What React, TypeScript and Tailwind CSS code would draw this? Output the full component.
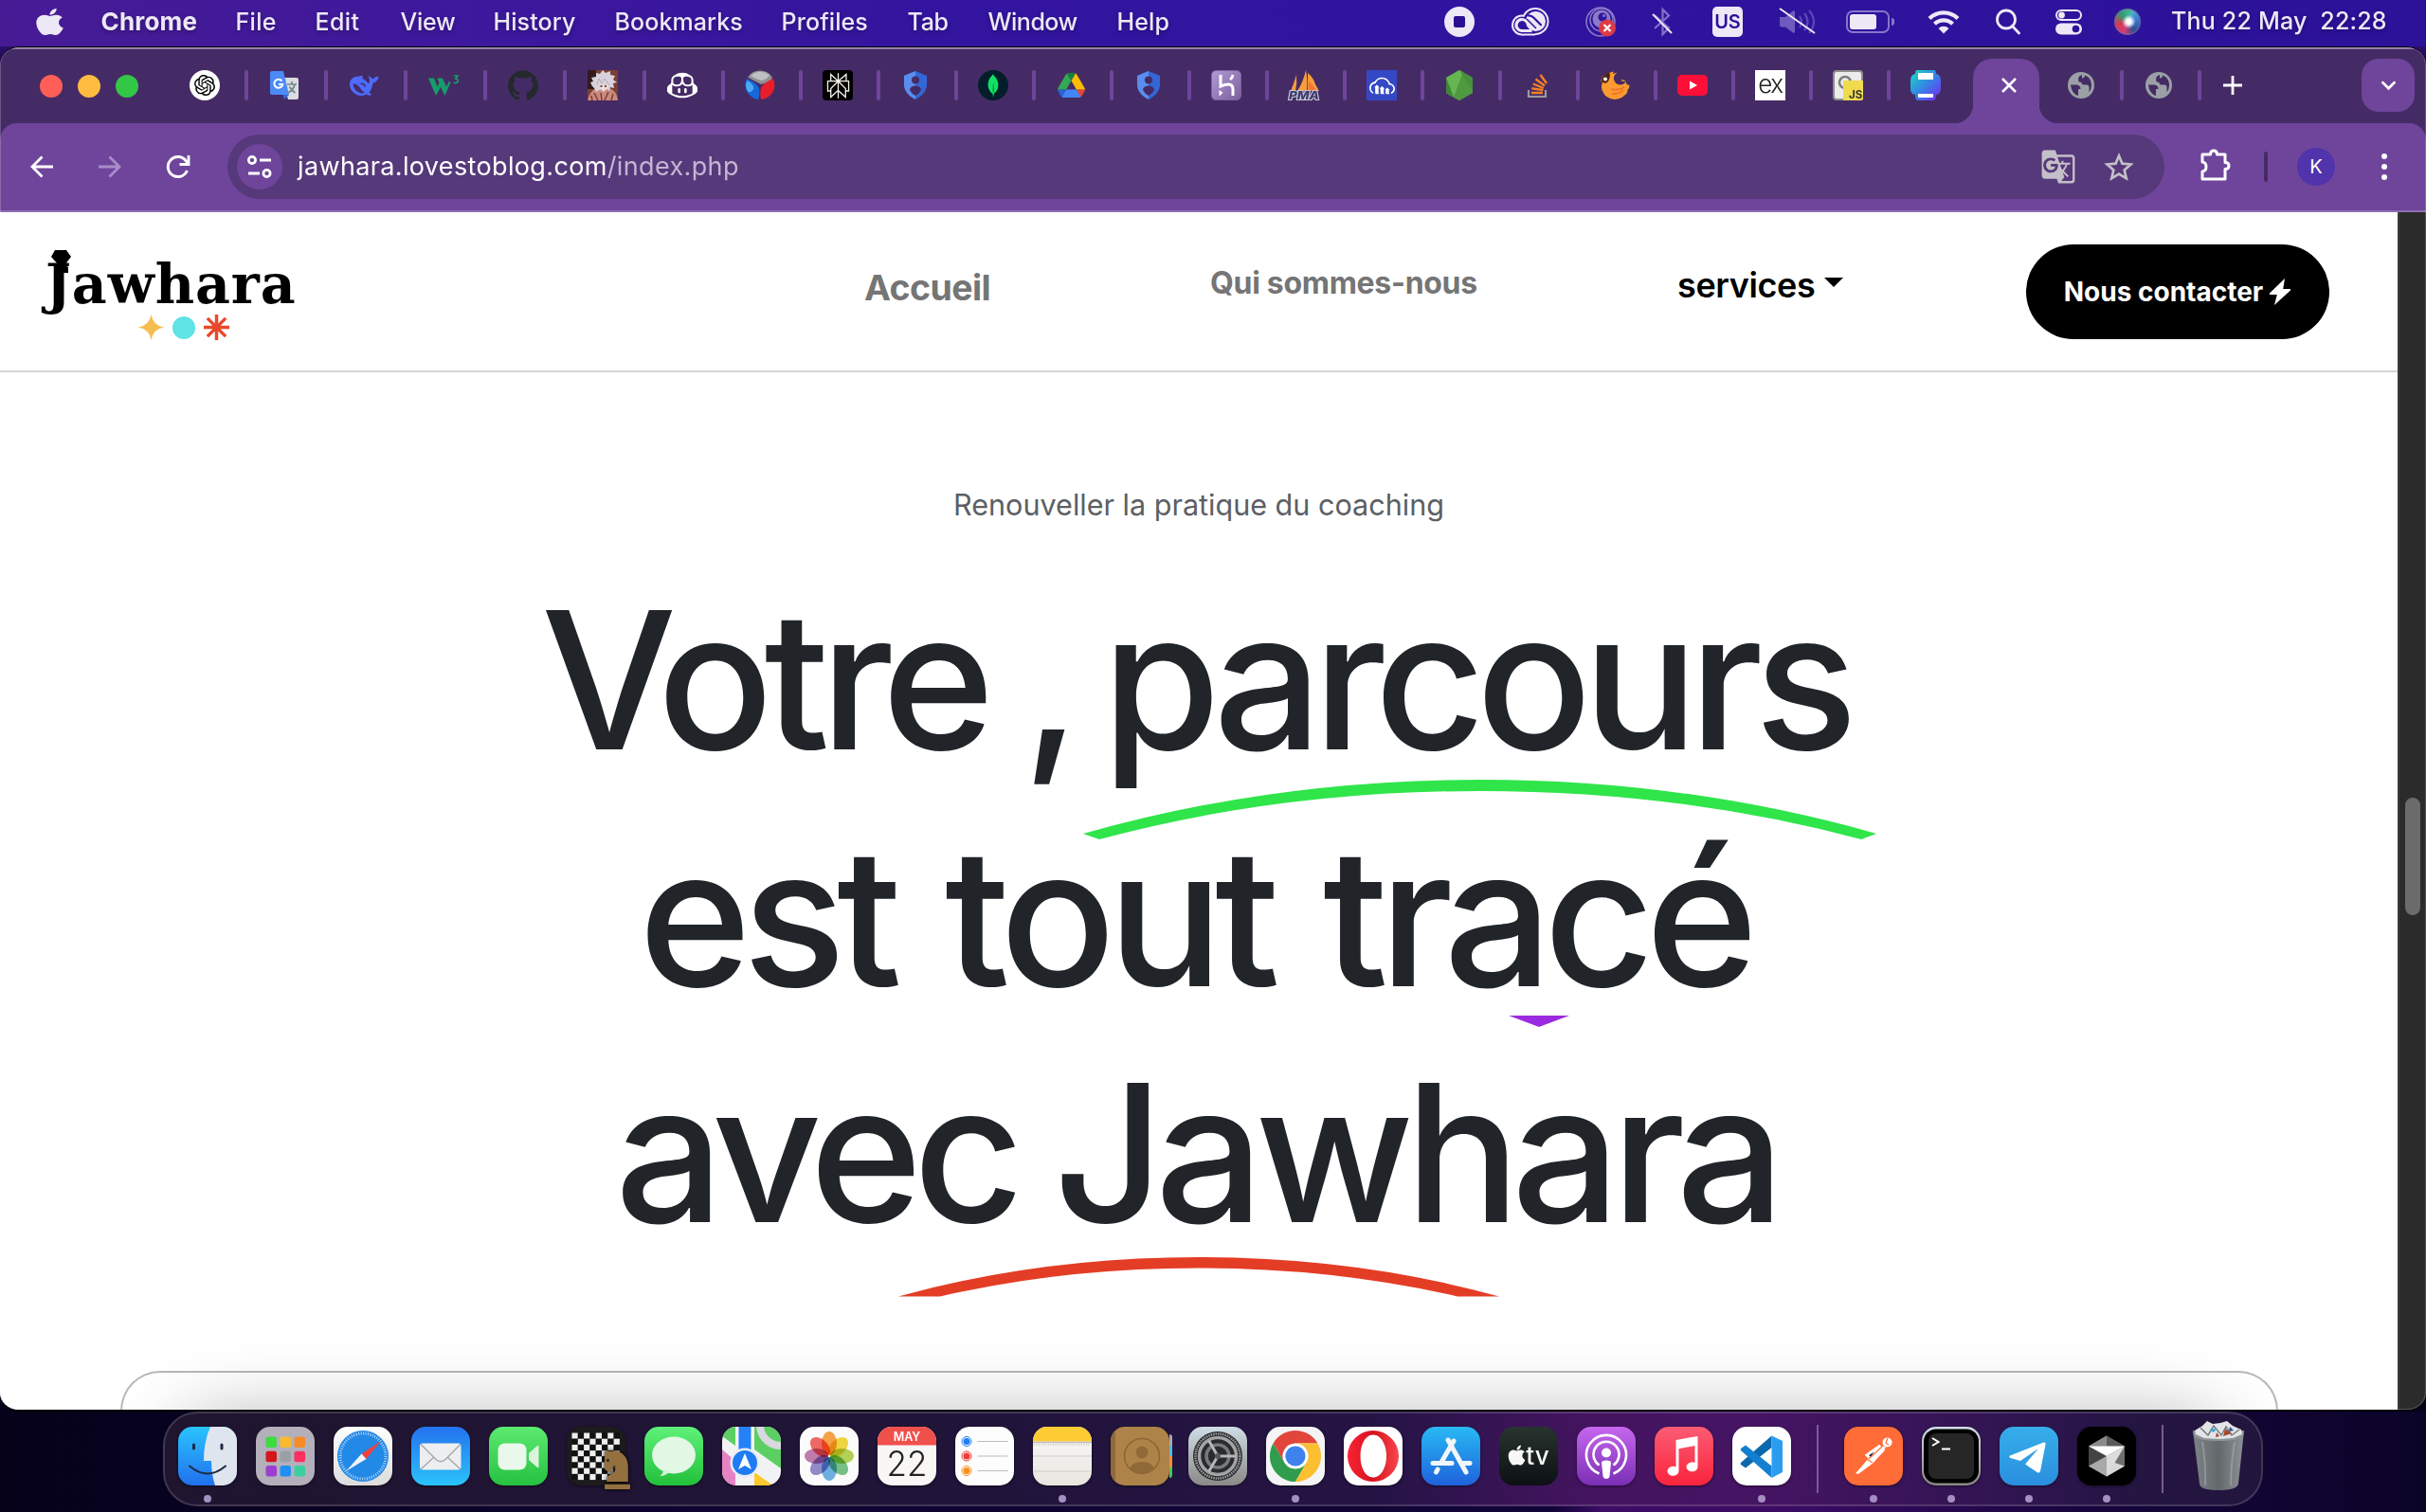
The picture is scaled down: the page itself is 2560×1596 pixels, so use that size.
import type { ReactNode } from "react";
import {
  SiOpenai, SiGithub, SiGithubcopilot, SiPerplexity, SiMongodb, SiCloudinary,
} from "react-icons/si";
import { MdGTranslate } from "react-icons/md";
import { FaApple, FaChessKnight } from "react-icons/fa";

/* ---------- menu bar ---------- */

const menus: { label: string; cls: string }[] = [
  { label: "Chrome", cls: "w-[142px] text-[26px] font-bold tracking-[0.2px]" },
  { label: "File", cls: "w-[84px] tracking-[0.3px]" },
  { label: "Edit", cls: "w-[90px] tracking-[0.4px]" },
  { label: "View", cls: "w-[98px] tracking-[-0.3px]" },
  { label: "History", cls: "w-[128px] tracking-[0.1px]" },
  { label: "Bookmarks", cls: "w-[176px] tracking-[0.1px]" },
  { label: "Profiles", cls: "w-[133px] tracking-[0.1px]" },
  { label: "Tab", cls: "w-[85px] tracking-[-0.3px]" },
  { label: "Window", cls: "w-[136px] tracking-[-0.5px]" },
  { label: "Help", cls: "tracking-[0.1px]" },
];

function MenuBar() {
  return (
    <div className="flex h-[49px] shrink-0 items-center bg-[linear-gradient(90deg,#471b94,#3d189d_20%,#32149f_42%,#30149f_60%,#2c1199)] pb-[3px] text-[25px] font-medium text-[#ece8f6] [text-shadow:0_2px_4px_rgba(0,0,0,0.3)]">
      <FaApple className="ml-[38px] h-[32px] w-[29px] shrink-0" preserveAspectRatio="none" />
      <div className="ml-[39.500px] flex shrink-0">
        {menus.map((m) => (
          <span key={m.label} className={`shrink-0 whitespace-nowrap leading-[32px] ${m.cls}`}>{m.label}</span>
        ))}
      </div>
      <div className="ml-auto flex items-center pr-[38px]">
        <div className="mr-[1px] flex size-8 items-center justify-center rounded-full bg-[#ece8f6]">
          <div className="size-[12px] rounded-[2px] bg-[#2a1090]" />
        </div>
        <svg className="ml-[38px] h-[30px] w-[40px]" viewBox="0 0 40 30">
          <g fill="#ece8f6"><circle cx="11" cy="18.500" r="11" /><circle cx="25" cy="14.500" r="14.500" /><path d="M11 18h14v11.500H11z" /></g>
          <g fill="#31149f"><circle cx="11" cy="18.500" r="9" /><circle cx="25" cy="14.500" r="12.500" /><path d="M11 20h14v7.500H11z" /></g>
          <circle cx="25.500" cy="14.500" r="10.500" fill="#ece8f6" />
          <path d="M21.500 24.500H11a6 6 0 1 1 4.500-10L24 22.500" fill="none" stroke="#ece8f6" strokeWidth="3.200" />
          <path d="M17.500 8.500q3.500-.3 6 2.300l7.500 7.500" fill="none" stroke="#31149f" strokeWidth="2.200" strokeLinecap="round" />
          <path d="m16.500 12.500 9 9" fill="none" stroke="#31149f" strokeWidth="1.600" strokeLinecap="round" />
        </svg>
        <svg className="ml-[38px] size-8" viewBox="0 0 32 32">
          <g fill="none" stroke="#8b7bc8" strokeWidth="1.500">
            <circle cx="16" cy="16" r="15" /><circle cx="17" cy="14" r="12" />
          </g>
          <circle cx="17" cy="13" r="9.500" fill="#8b7bc8" />
          <circle cx="18" cy="11" r="4.500" fill="#31149f" /><circle cx="19.500" cy="9.500" r="1.500" fill="#8b7bc8" />
          <circle cx="23" cy="22.500" r="9" fill="#dc3b46" />
          <path d="m19.500 19 7 7m0-7-7 7" stroke="#fff" strokeWidth="2.200" />
        </svg>
        <svg className="ml-[37px] h-[32px] w-[24px]" viewBox="0 0 24 32" fill="none">
          <path d="m4 9 15 13.500L12.500 29V3L19 9.500 4 23" stroke="#8171c6" strokeWidth="2.200" />
          <path d="m2 8 20 20" stroke="#ece8f6" strokeWidth="2" />
        </svg>
        <div className="ml-[41px] flex size-8 items-center justify-center rounded-[5px] bg-[#ece8f6] text-[20px] font-semibold text-[#2c1199] [text-shadow:none]">US</div>
        <svg className="ml-[38px] h-[30px] w-[40px]" viewBox="0 0 40 30" fill="none">
          <path d="M1 10h6l8-6.500q2-1 2 1v21q0 2-2 1L7 20.500H3q-2 0-2-2z" fill="#6d5cbe" />
          <path d="M22 9q4 6 0 12M27 6q7 9 0 18M32 3q10 12 0 24" stroke="#5a48b4" strokeWidth="2.200" />
          <path d="m1 1 37 26" stroke="#ece8f6" strokeWidth="2" />
        </svg>
        <div className="ml-[31px] flex items-center gap-[2px]">
          <div className="flex h-6 w-[46px] items-center rounded-[7px] border-2 border-[#8577cb] px-[2px]">
            <div className="h-4 w-7 rounded-[3px] bg-[#ece8f6]" />
          </div>
          <div className="h-2 w-[3px] rounded-r-full bg-[#8577cb]" />
        </div>
        <svg className="ml-[35px] h-[26px] w-[34px]" viewBox="0 0 34 26" fill="none" stroke="#ece8f6" strokeWidth="4.200">
          <path d="M2 9.500a21.500 21.500 0 0 1 30 0M7.500 15.200a13.500 13.500 0 0 1 19 0" />
          <path d="M17 25.500 11.500 20a8 8 0 0 1 11 0z" fill="#ece8f6" stroke="none" />
        </svg>
        <svg className="ml-[38px] h-[28px] w-[26px]" viewBox="0 0 26 28" fill="none" stroke="#ece8f6" strokeWidth="2.800">
          <circle cx="11" cy="11.500" r="9.500" /><path d="m17.500 18.500 7 7.500" strokeLinecap="round" />
        </svg>
        <svg className="ml-[37px] h-[28px] w-[28px]" viewBox="0 0 28 28">
          <rect x="1" y="2" width="26" height="10" rx="5" fill="none" stroke="#ece8f6" strokeWidth="2" />
          <circle cx="6.500" cy="7" r="3.400" fill="#ece8f6" />
          <rect x="0" y="15.500" width="28" height="12" rx="6" fill="#ece8f6" />
          <circle cx="21.500" cy="21.500" r="3.800" fill="#2c1199" />
        </svg>
        <div className="ml-[34px] size-7 rounded-full bg-[radial-gradient(circle_at_55%_50%,#ffffff_0_12%,transparent_35%),conic-gradient(from_20deg,#4fb5c8,#3a76d0,#2b4f90,#d33f74,#d23b55,#2f9c72,#4bb59a)] ring-1 ring-[#6f66a8] ring-inset" />
        <span className="ml-[32px] w-[231px] whitespace-pre tracking-[0.2px]">Thu 22 May  22:28</span>
      </div>
    </div>
  );
}

/* ---------- tab favicons ---------- */

const Shield = () => (
  <svg viewBox="0 0 32 32" className="size-8">
    <path d="M16 1 28 6v9c0 7-5 12.500-12 16C9 27.500 4 22 4 15V6z" fill="#3367d6" />
    <path d="M16 1 4 6v9c0 7 5 12.500 12 16z" fill="#5a8dee" />
    <circle cx="16" cy="10.500" r="4" fill="#452b65" />
    <path d="M10 21a6 4.500 0 0 1 12 0q-2 4-6 6-4-2-6-6" fill="#452b65" />
  </svg>
);

const Globe = () => (
  <svg viewBox="0 0 28 28" className="size-[28px]">
    <circle cx="14" cy="14" r="14" fill="#9aa0a6" />
    <path d="M3 13.500h6.500q4 .5 4 4.500h-2.500v7Q4 23 3 13.500M15 3q-4 1-4 5 0 3 3.500 3 0 2.500 2.500 2.500h3q2.500 0 2.500 3v5q2.500-3 2.500-7.500Q25 6 18 3.500q0 3-3 3z" fill="#452b65" />
  </svg>
);

const favicons: { id: string; icon: ReactNode }[] = [
  { id: "chatgpt", icon: <div className="flex size-8 items-center justify-center rounded-full bg-white"><SiOpenai className="size-[22px] text-black" /></div> },
  {
    id: "translate",
    icon: (
      <svg viewBox="0 0 32 32" className="size-8">
        <path d="M13 8h16a2 2 0 0 1 2 2v19a2 2 0 0 1-2 2H20z" fill="#dadce0" />
        <path d="M3 1h12l6 25H3a2 2 0 0 1-2-2V3a2 2 0 0 1 2-2" fill="#4c8bf5" />
        <path d="m14 26 7 0-4.500 5z" fill="#3367d6" />
        <path d="M13.500 11.500a4.500 4.500 0 1 0 .8 3.500H10" fill="none" stroke="#fff" strokeWidth="2" />
        <path d="M19 15h10M24 12v3M27 15q-1 6-7 9M21.500 17.500q2 4 6 6.500" fill="none" stroke="#6f8790" strokeWidth="1.700" />
      </svg>
    ),
  },
  {
    id: "deepseek",
    icon: (
      <svg viewBox="0 0 32 32" className="size-8">
        <path d="M1 15C1 9 6 6 12 6.500q2-1.500 3 .5l-1 1.500q4 2 6.500 5.500 2-1 1.500-4l-1.500-4q3 1 5 3.500 2-2.500 6-3-.5 5.500-5.500 7-1 .4-1 2-.5 5-3.500 8 1.500 2 3 2.500-3 1.500-6-.5Q13 28.500 7.500 25.500 1 21.500 1 15" fill="#4d6bfe" />
        <path d="M4.500 14.500q4.500-.5 7.500 4.500 2.500 4 5 4.500-4 2-7.500-.5Q5 20 4.500 14.500" fill="#452b65" />
        <path d="M12.500 14.500q3.500-1 5 3" stroke="#452b65" strokeWidth="1.500" fill="none" />
      </svg>
    ),
  },
  {
    id: "w3",
    icon: (
      <svg viewBox="0 0 32 32" className="size-8">
        <path d="M0 8.500h6l3.500 9 2-4-2-5h5.500l4 9 3-6 1.500 1.500L17.500 27l-4.500-9-5 9z" fill="#169c6b" />
        <path d="M27 6h4l-2.200 3q2.500.4 2.500 2.600 0 2-3 2-1 0-1.800-.5" fill="none" stroke="#169c6b" strokeWidth="1.700" />
      </svg>
    ),
  },
  { id: "github", icon: <SiGithub className="size-8 text-[#24292e]" /> },
  {
    id: "portrait",
    icon: (
      <svg viewBox="0 0 32 32" className="size-8">
        <path d="M0 0h32v32H0z" fill="#7a3f35" />
        <path d="M0 0h9v20H0z" fill="#33191d" />
        <path d="M0 32q2-11 11-13h12q8 3 9 13z" fill="#c98a7c" />
        <path d="m5 17-2-4 3-1-2-4 5-1 0-4 4 1 3-4 3 3 5-2 0 4 5 1-2 4 4 3-4 1 1 5-4-1-1 4-3-2-8 1-3 2-2-4z" fill="#d9d2dc" />
        <path d="m12 13 4-2 6 3-1 5-4 4-4-4z" fill="#f1dcd6" />
        <path d="m10 15 2-6 3 5 3-5 5 7" fill="#d9d2dc" stroke="#a79fb4" strokeWidth=".8" />
        <path d="M13.500 17h2m2.500 0h2" stroke="#3a2130" strokeWidth="1.600" />
        <path d="m7 24 4 8m11-9-4 9M14 24l1 8M4 27l1 5M27 25l-2 7" stroke="#7a3838" strokeWidth="1.400" />
      </svg>
    ),
  },
  { id: "copilot", icon: <SiGithubcopilot className="size-8 text-white" /> },
  {
    id: "ball",
    icon: (
      <svg viewBox="0 0 32 32" className="size-8">
        <path d="M3 7.500A15.500 15.500 0 0 1 29 7.500Q28 13 17 15 9 11 3 7.500" fill="#8f9194" />
        <path d="M6 6q9-8 20-1-2 5-9 6Q11 9 6 6" fill="#bfc0c3" />
        <path d="M2 9q10 4 13 10 1 6-.5 12A15.500 15.500 0 0 1 2 9" fill="#1668d8" />
        <path d="M2.500 11q6 3 7 8-2 5-6 4Q-1 17 2.500 11" fill="#4ba9f2" />
        <path d="M30 9Q20 13 17 19q-1.500 6 0 12A15.500 15.500 0 0 0 30 9" fill="#e81e2b" />
      </svg>
    ),
  },
  { id: "perplexity", icon: <div className="flex size-8 items-center justify-center rounded-[4px] bg-black"><SiPerplexity className="size-[27px] text-[#f5f3e8]" /></div> },
  { id: "shield-a", icon: <Shield /> },
  { id: "mongodb", icon: <div className="flex size-8 items-center justify-center rounded-full bg-[#021e2b]"><SiMongodb className="size-6 text-[#10e063]" /></div> },
  {
    id: "drive",
    icon: (
      <svg viewBox="0 0 87.300 78" className="w-[29px]">
        <path d="m6.600 66.850 3.850 6.650c.8 1.400 1.950 2.500 3.300 3.300l13.750-23.800h-27.500c0 1.550.4 3.100 1.200 4.500z" fill="#2463d8" />
        <path d="m43.650 25-13.750-23.800c-1.350.8-2.500 1.900-3.300 3.300l-25.400 44a9.060 9.060 0 0 0-1.200 4.500h27.500z" fill="#34a853" />
        <path d="m73.550 76.800c1.350-.8 2.500-1.900 3.300-3.300l1.600-2.750 7.650-13.250c.8-1.400 1.200-2.950 1.200-4.500h-27.500l5.850 11.500z" fill="#ea4335" />
        <path d="m43.650 25 13.750-23.800c-1.350-.8-2.900-1.200-4.500-1.200h-18.500c-1.600 0-3.150.45-4.500 1.200z" fill="#188038" />
        <path d="m59.800 53h-32.300l-13.750 23.800c1.350.8 2.900 1.200 4.500 1.200h50.800c1.600 0 3.150-.45 4.500-1.200z" fill="#4285f4" />
        <path d="m73.400 26.500-12.700-22c-.8-1.400-1.950-2.500-3.300-3.300l-13.750 23.800 16.150 28h27.450c0-1.550-.4-3.100-1.200-4.500z" fill="#fbbc04" />
      </svg>
    ),
  },
  { id: "shield-b", icon: <Shield /> },
  {
    id: "heroku",
    icon: (
      <div className="size-8 rounded-[5px] border border-[#7a639f] bg-[linear-gradient(135deg,#b19bd2,#7c5f9f)]">
        <svg viewBox="0 0 30 30" className="size-full" fill="none" stroke="#fff" strokeWidth="3">
          <path d="M9 4v12q13-5 13 3v7" />
          <path d="M22 4q-.3 3-3 5" strokeWidth="2.600" />
          <path d="m7.500 20 4 3-4 3.500z" fill="#fff" stroke="none" />
        </svg>
      </div>
    ),
  },
  {
    id: "pma",
    icon: (
      <svg viewBox="0 0 32 32" className="size-8 overflow-visible">
        <path d="M8 5q1 9-1 17H2Q5 15 8 5M18 0q2 10 1 22H9Q15 13 18 0M20 3q6 5 8 12l4 7H20z" fill="#f89c3c" />
        <path d="m21 11 9 11h-9z" fill="#f2763a" />
        <text x="0" y="31" textLength="32" lengthAdjust="spacingAndGlyphs" fontFamily="Inter, sans-serif" fontSize="12" fontWeight="800" fontStyle="italic" fill="#3c3b6e" stroke="#c9c9da" strokeWidth="2" paintOrder="stroke">PMA</text>
      </svg>
    ),
  },
  { id: "cloudinary", icon: <div className="flex size-8 items-center justify-center bg-[#3448c5]"><SiCloudinary className="size-[27px] text-white" /></div> },
  {
    id: "node",
    icon: (
      <svg viewBox="0 0 32 32" className="size-8">
        <path d="m16 0 14 8v16l-14 8-14-8V8z" fill="#539e43" />
        <path d="m2 8 6 20-6-4zM2 8l14-8 4 2L10 29z" fill="#65b550" />
        <path d="m20 2 10 22-14 8-6-3z" fill="#4f9a40" />
        <path d="m16 0 14 8v14z" fill="#478f3a" />
        <path d="m2 8 8 21-8-5z" fill="#3f8438" />
      </svg>
    ),
  },
  {
    id: "stackoverflow",
    icon: (
      <svg viewBox="0 0 32 32" className="size-8" fill="none">
        <path d="M7 21v7h18v-7" stroke="#9a9b9e" strokeWidth="2.200" />
        <path d="M10 24h12M10.300 19.300l12 1.800M11.800 14.500l11 4.500M14.500 9.500l9.500 7M19.500 5l6.500 9" stroke="#f48024" strokeWidth="2.400" />
      </svg>
    ),
  },
  {
    id: "bird",
    icon: (
      <svg viewBox="0 0 32 32" className="size-8">
        <path d="M1 11Q4 3 15 1.500L13.500 4l5-1.500Q14 6 15 10q1.500 5 6.500 5.500 5 0 6-4-3.500 1.500-5-1.500 5 0 6 5l3 1q0 3-2 5 0 4-4 6-2 3-10 4Q6 30 3 22q-2-4 0-9z" fill="#fb9a2f" />
        <path d="M1.500 11Q4 4 10.500 2.500q1.500 6-2.500 10.500-4 2-6.500-2" fill="#4b240f" />
        <circle cx="6" cy="9.500" r="2" fill="#fff" />
        <path d="M12 20q8 2 14-2M13 25q7 1 12-4" stroke="#f0702a" strokeWidth="1.600" fill="none" />
      </svg>
    ),
  },
  { id: "youtube", icon: <svg viewBox="0 0 32 32" className="size-8"><rect y="5" width="32" height="22" rx="5" fill="#ff0f38" /><path d="M13 11.500v9l8-4.500z" fill="#fff" /></svg> },
  { id: "express", icon: <div className="flex size-8 items-center justify-center bg-white pb-[3px] text-[26px] font-light tracking-[-1.5px] text-[#222]">ex</div> },
  {
    id: "chartjs",
    icon: (
      <svg viewBox="0 0 32 32" className="size-8">
        <rect x="1" y="1" width="30" height="30" rx="3" fill="#ececec" stroke="#8d8d8d" strokeWidth="2" />
        <circle cx="13" cy="13" r="6" fill="none" stroke="#7d7d7d" strokeWidth="2.500" />
        <path d="M11 11h21v19a2 2 0 0 1-2 2H11z" fill="#f0db4f" />
        <text x="17" y="30" fontFamily="Inter, sans-serif" fontWeight="700" fontSize="11.500" fill="#33332a">JS</text>
      </svg>
    ),
  },
  {
    id: "printer",
    icon: (
      <svg viewBox="0 0 32 32" className="size-8">
        <defs><linearGradient id="prn" x1="0" y1="0" x2="1" y2="1"><stop stopColor="#12dfc5" /><stop offset=".55" stopColor="#3a7be6" /><stop offset="1" stopColor="#7a22f0" /></linearGradient></defs>
        <path d="M7 0h18q2 0 2 4 5 1 5 7v8q0 7-5 7 0 6-3 6H8q-3 0-3-6-5 0-5-7v-8q0-6 5-7 0-4 2-4" fill="url(#prn)" />
        <path d="M8 3h16v7H8zM8 25h16v4H8z" fill="#fff" />
      </svg>
    ),
  },
];

function TabCell({ icon, wide, last }: { icon: ReactNode; wide?: boolean; last?: boolean }) {
  return (
    <div className={`flex h-[76px] shrink-0 items-center justify-between pl-[21px] ${wide ? "w-[84px] pr-px" : "w-[82px]"}`}>
      <div className="flex size-8 items-center justify-center">{icon}</div>
      {!last && <div className="h-8 w-1 rounded-full bg-[#6e459b]" />}
    </div>
  );
}

function TabStrip() {
  return (
    <div className="flex h-[78px] shrink-0 bg-[#452b65]">
      <div className="mr-[33px] ml-[42px] flex h-[78px] items-center gap-4">
        <div className="size-6 rounded-full bg-[#ff5f57]" />
        <div className="size-6 rounded-full bg-[#febc40]" />
        <div className="size-6 rounded-full bg-[#33c748]" />
      </div>
      {favicons.map((f, i) => (
        <TabCell key={f.id} icon={f.icon} wide={i < 6} last={i === favicons.length - 1} />
      ))}
      <div className="relative mt-[10px] mr-[7px] ml-[5px] flex h-[68px] w-[70px] shrink-0 items-center justify-center rounded-t-[20px] bg-[#6e459b] pb-[12px] pl-[6px]">
        <div className="absolute right-full bottom-0 size-5 bg-[radial-gradient(circle_at_0_0,transparent_20px,#6e459b_20.5px)]" />
        <div className="absolute bottom-0 left-full size-5 bg-[radial-gradient(circle_at_100%_0,transparent_20px,#6e459b_20.5px)]" />
        <svg viewBox="0 0 16 16" className="size-4" stroke="#fff" strokeWidth="2.600"><path d="m1 1 14 14M15 1 1 15" /></svg>
      </div>
      <TabCell icon={<Globe />} />
      <TabCell icon={<Globe />} />
      <div className="flex h-[76px] w-[66px] items-center justify-center">
        <svg viewBox="0 0 20 20" className="size-5" stroke="#fff" strokeWidth="2.800"><path d="M10 0v20M0 10h20" /></svg>
      </div>
      <div className="mt-[10px] mr-3 ml-auto flex h-[56px] w-[56px] items-center justify-center rounded-[18px] bg-[#6e459b]">
        <svg viewBox="0 0 18 12" className="h-[11px] w-[17px]" fill="none" stroke="#fff" strokeWidth="3"><path d="m1.500 1.500 7.500 7.500 7.500-7.500" /></svg>
      </div>
    </div>
  );
}

function Toolbar() {
  return (
    <div className="h-[94px] shrink-0 bg-[#452b65]">
      <div className="flex h-full items-center rounded-t-[18px] border-b-2 border-[#8e6fb3] bg-[#6e459b]">
        <svg viewBox="0 0 24 24" className="ml-8 size-6" fill="none" stroke="#fff" strokeWidth="2.800"><path d="M24 12H2M12.500 1.500 2 12l10.500 10.500" /></svg>
        <svg viewBox="0 0 24 24" className="ml-[48px] size-6" fill="none" stroke="#a98dc8" strokeWidth="2.800"><path d="M0 12h22M11.500 1.500 22 12 11.500 22.500" /></svg>
        <svg viewBox="0 0 26 26" className="ml-[47px] size-[26px]" fill="none" stroke="#fff" strokeWidth="2.900"><path d="M22.500 17A10.500 10.500 0 1 1 21 6.500l2.500 3M24 1v9.500h-9.500" /></svg>
        <div className="ml-[39px] flex h-[68px] w-[2044px] items-center rounded-full bg-[#56397a] pl-[10px]">
          <div className="flex size-12 items-center justify-center rounded-full bg-[#6e459b]">
            <svg viewBox="0 0 26 24" className="h-6 w-[26px]" fill="none" stroke="#fff" strokeWidth="2.800">
              <circle cx="5" cy="5" r="3.600" /><path d="M13 5h12M1 19h12" /><circle cx="20.500" cy="19" r="3.600" />
            </svg>
          </div>
          <span className="ml-[16px] pt-px text-[27px] tracking-[0.36px] whitespace-nowrap text-white">jawhara.lovestoblog.com<span className="text-[#c3b5d3]">/index.php</span></span>
          <MdGTranslate className="ml-auto size-[38px] text-[#c4bfc8]" />
          <svg viewBox="0 0 32 32" className="mr-[32px] ml-[29px] size-8" fill="none" stroke="#c4bfc8" strokeWidth="2.700"><path d="m16 4.500 3.500 8.200 9 .8-6.800 6 2 8.800-7.700-4.700-7.700 4.700 2-8.800-6.800-6 9-.8z" /></svg>
        </div>
        <svg viewBox="0 0 36 36" className="ml-[36px] size-9 -translate-y-[2px]" fill="none" stroke="#fff" strokeWidth="3" strokeLinejoin="round">
          <path d="M4 7h8.500q0-4 3.500-4t3.500 4H28v8.500q4 0 4 3.500t-4 3.500V33H4v-8q4-.5 4-5t-4-5z" />
        </svg>
        <div className="ml-[33px] h-8 w-1 rounded-full bg-[#452b65]" />
        <div className="ml-[31px] flex size-10 items-center justify-center rounded-full bg-[#5133ab] text-[20px] text-white">K</div>
        <div className="ml-[49px] flex flex-col gap-[5px]">
          <div className="size-[6px] rounded-full bg-white" />
          <div className="size-[6px] rounded-full bg-white" />
          <div className="size-[6px] rounded-full bg-white" />
        </div>
      </div>
    </div>
  );
}

/* ---------- web page ---------- */

function Logo() {
  return (
    <div className="relative mt-[14px] ml-[44px] w-[272px] shrink-0">
      <svg viewBox="0 0 24 24" className="absolute top-[-6px] left-[9px] size-6"><path d="M5 0h12l5 7-7 9 4 2v6H5v-6l4-2-8-9z" /></svg>
      <div className="ml-[4px] font-['DejaVu_Serif'] text-[57px] leading-[60px] font-bold tracking-[0.9px] text-black">Jawhara</div>
      <div className="mt-[2px] ml-[102px] flex items-center gap-[9px]">
        <svg viewBox="0 0 28 28" className="size-[27px]"><path d="M14 0q2 12 14 14-12 2-14 14Q12 16 0 14 12 12 14 0" fill="#f5bd50" /></svg>
        <div className="size-6 rounded-full bg-[#5fe3e5]" />
        <svg viewBox="0 0 28 28" className="size-[27px]" stroke="#e8482a" strokeWidth="3.600"><path d="M14 0v28M0 14h28M4 4l20 20M24 4 4 24" /></svg>
      </div>
    </div>
  );
}

function SiteHeader() {
  return (
    <header className="flex h-[169px] shrink-0 items-center border-b-2 border-[#d5d5d5] bg-white font-semibold">
      <Logo />
      <a className="ml-[596px] w-[365px] shrink-0 pb-[7px] text-[37.5px] font-[650] tracking-[-0.6px] whitespace-nowrap text-[#757575]">Accueil</a>
      <a className="w-[493px] shrink-0 pb-[17px] text-[32px] font-[650] tracking-[-0.3px] whitespace-nowrap text-[#757575]">Qui sommes-nous</a>
      <a className="flex w-[368px] shrink-0 items-center gap-[10px] pb-[14px] text-[36px] tracking-[-0.4px] text-black">
        services
        <span className="mb-[6px] border-x-[10px] border-t-[10px] border-x-transparent border-t-black" />
      </a>
      <button className="flex h-[100px] w-[320px] shrink-0 items-center justify-center gap-[6px] rounded-full bg-black text-[28px] font-bold text-white">
        Nous contacter
        <svg viewBox="0 0 24 28" className="h-[28px] w-[24px]"><path d="M17 0 1 15.500q-.8 1.500.8 1.500h7L6 28 23 12.500q.8-1.500-.8-1.500h-7z" fill="#fff" /></svg>
      </button>
    </header>
  );
}

function Hero() {
  return (
    <main className="flex flex-1 flex-col bg-white">
      <p className="mt-[120px] ml-[1006px] text-[30.6px] leading-[40px] tracking-[-0.02px] whitespace-nowrap text-[#5c5f63]">Renouveller la pratique du coaching</p>
      <h1 className="relative mt-[40px] h-[750px] text-[202px] leading-[250px] font-medium tracking-[-9.2px] whitespace-nowrap text-[#212529]">
        <span className="flex h-[249.600px] pl-[571px]">
          <span className="w-[508px] tracking-[-9.400px]">Votre</span>
          <span className="w-[84px]">,</span>
          <span className="tracking-[-9.400px]">parcours</span>
        </span>
        <span className="flex h-[249.600px] pl-[674px]">
          <span className="w-[323px]">est</span>
          <span className="w-[399px] tracking-[-8.400px]">tout</span>
          <span>tracé</span>
        </span>
        <span className="flex h-[249.600px] pl-[649px]">
          <span className="w-[463px]">avec</span>
          <span>Jawhara</span>
        </span>
        <svg viewBox="0 0 837 64" className="absolute top-[229px] left-[1143px] h-[64px] w-[837px]"><path d="M0 58Q200 1 418.500 1T837 58L821 64Q630 13 418.500 13T17 64z" fill="#2fe54a" /></svg>
        <svg viewBox="0 0 64 12" className="absolute top-[479px] left-[1592px] h-[12px] w-[64px]"><path d="M0 0h64L32 12z" fill="#9b2be0" /></svg>
        <svg viewBox="0 0 634 43" className="absolute top-[733px] left-[948px] h-[43px] w-[634px]"><path d="M0 42.500Q150 1 317 1t317 41.500h-44Q460 12.500 317 12.500T44 42.500z" fill="#e43d26" /></svg>
      </h1>
      <section className="mt-[104px] ml-[127px] h-[60px] w-[2277px] rounded-t-[42px] border-2 border-b-0 border-[#b8b8b8] pt-[50px] pr-[58px] pl-[62px]">
        <div className="h-[300px] rounded-[40px] bg-[#dcdcdc] shadow-[0_0_80px_rgba(0,0,0,0.32)]" />
      </section>
    </main>
  );
}

/* ---------- dock ---------- */

const Tile = ({ bg, children }: { bg: string; children?: ReactNode }) => (
  <div className={`size-[62px] overflow-hidden rounded-[15px] shadow-[0_1px_3px_rgba(0,0,0,0.5)] ${bg}`}>
    <svg viewBox="0 0 62 62" className="size-full">{children}</svg>
  </div>
);

const launchColors = ["#3ddc3f", "#fdb92c", "#f78b28", "#d3151c", "#9aa0a5", "#ff2f5f", "#9c3fd0", "#1f8ff5", "#3ccf9e"];
const petals = ["#f7942a", "#efd21f", "#a8cc3b", "#5fb873", "#57a5dc", "#7f78c0", "#b8679f", "#f0504a"];

const apps: { id: string; open?: boolean; icon: ReactNode }[] = [
  {
    id: "finder", open: true,
    icon: (
      <Tile bg="bg-[linear-gradient(#2ac4fd,#2070ee)]">
        <path d="M34 0Q27 15 27 36h8q0 14 4 26h23V0z" fill="#dfe5ee" />
        <path d="M16.500 19v4M46 19v4" stroke="#1c2b44" strokeWidth="3" strokeLinecap="round" />
        <path d="M12 41.500q19 16 38 0" fill="none" stroke="#1c2b44" strokeWidth="2" strokeLinecap="round" />
      </Tile>
    ),
  },
  {
    id: "launchpad",
    icon: (
      <Tile bg="bg-[#b3b0bb]">
        {launchColors.map((c, i) => <rect key={c} x={10.5 + (i % 3) * 15} y={10.5 + Math.floor(i / 3) * 15.3} width="11.500" height="11.500" rx="2.500" fill={c} />)}
      </Tile>
    ),
  },
  {
    id: "safari",
    icon: (
      <Tile bg="bg-[linear-gradient(#fff,#dcdcdc)]">
        <circle cx="31" cy="31" r="27" fill="#2389e6" />
        <circle cx="31" cy="31" r="24" fill="none" stroke="#bfe0fb" strokeWidth="3" strokeDasharray="0.900 1.600" />
        <path d="m50 15-15.500 19-5-5.500z" fill="#f0403a" />
        <path d="m13 47 16.500-18.500 5 5.500z" fill="#f1f3f5" />
      </Tile>
    ),
  },
  {
    id: "mail",
    icon: (
      <Tile bg="bg-[linear-gradient(#2472ef,#2bc3fb)]">
        <rect x="9" y="17.500" width="43.500" height="28" rx="3" fill="#eceef0" />
        <path d="m10 18.500 16 16q5 4.500 10 0l16-16M10 45l14-13M52 45 38 32" fill="none" stroke="#a4a8ad" strokeWidth="1.400" />
      </Tile>
    ),
  },
  {
    id: "facetime",
    icon: (
      <Tile bg="bg-[linear-gradient(#5bea70,#27c140)]">
        <rect x="9.500" y="17.500" width="30" height="28" rx="7" fill="#e9f8ea" />
        <path d="m42 28 9-8q1.500-1 1.500 1v21q0 2-1.500 1l-9-8z" fill="#dcf3de" />
      </Tile>
    ),
  },
  {
    id: "chess",
    icon: (
      <div className="relative">
        <Tile bg="bg-[#1c1c1c]">
          {Array.from({ length: 64 }, (_, i) => (
            <rect key={i} x={5.5 + (i % 8) * 6.3} y={6.5 + Math.floor(i / 8) * 6.2} width="6.300" height="6.200" fill={(i + Math.floor(i / 8)) % 2 ? "#111" : "#eee"} />
          ))}
        </Tile>
        <FaChessKnight className="absolute right-[-5px] bottom-[-4px] h-[43px] w-[27px] text-[#94703f] drop-shadow-[0_0_2px_#000]" preserveAspectRatio="none" />
      </div>
    ),
  },
  {
    id: "messages",
    icon: (
      <Tile bg="bg-[linear-gradient(#5ff179,#22c03b)]">
        <ellipse cx="31" cy="30" rx="23" ry="19.500" fill="#e2f7e4" />
        <path d="M20 45q0 5-4 7 7 0 11-5z" fill="#d4f1d7" />
      </Tile>
    ),
  },
  {
    id: "maps",
    icon: (
      <Tile bg="bg-[#f2f2f4]">
        <path d="M0 0h14v20L0 10zM34 0h28v44L34 24z" fill="#5ccf62" />
        <path d="M0 24 14 36v26H0z" fill="#e583c5" />
        <path d="m34 48 20 14H34z" fill="#fbc82e" />
        <path d="M40 0a22 22 0 0 0 22 20" fill="none" stroke="#d8d8e0" strokeWidth="8" />
        <path d="M17.500 0h13v34h-13z" fill="#2581f7" />
        <circle cx="24" cy="38" r="15.500" fill="#e9ecf4" />
        <circle cx="24" cy="38" r="13" fill="#1f7cf2" />
        <path d="m24 28 7 17-7-4-7 4z" fill="#fff" />
      </Tile>
    ),
  },
  {
    id: "photos",
    icon: (
      <Tile bg="bg-[#fbfbfb]">
        {petals.map((c, i) => <ellipse key={c} cx="31" cy="17.500" rx="8" ry="12.500" fill={c} opacity=".85" transform={`rotate(${i * 45} 31 31)`} className="mix-blend-multiply" />)}
      </Tile>
    ),
  },
  {
    id: "calendar",
    icon: (
      <Tile bg="bg-[#f8f7f6]">
        <path d="M0 0h62v19.500H0z" fill="#f0504c" />
        <text x="31" y="15" textAnchor="middle" fontFamily="Inter, sans-serif" fontWeight="600" fontSize="12.500" fill="#fff">MAY</text>
        <text x="31" y="52" textAnchor="middle" textLength="43" lengthAdjust="spacingAndGlyphs" fontFamily="Inter, sans-serif" fontWeight="300" fontSize="37" fill="#222">22</text>
      </Tile>
    ),
  },
  {
    id: "reminders",
    icon: (
      <Tile bg="bg-[#fdfdfd]">
        {["#1f7cf2", "#ee3d38", "#f58f1f"].map((c, i) => (
          <g key={c}>
            <circle cx="12" cy={15.5 + i * 15.5} r="3.600" fill={c} /><circle cx="12" cy={15.5 + i * 15.5} r="5" fill="none" stroke={c} />
            <path d={`M23.500 ${15.5 + i * 15.5}h32`} stroke="#bcbcbc" strokeWidth="1.200" />
          </g>
        ))}
      </Tile>
    ),
  },
  {
    id: "notes", open: true,
    icon: (
      <Tile bg="bg-[linear-gradient(#fafafa,#e8e5df)]">
        <path d="M0 0h62v15.500H0z" fill="#fdcb33" />
        <path d="M0 16.500h62" stroke="#bdbab4" strokeWidth="1.500" />
        <path d="M1 19h60" stroke="#aaa7a2" strokeDasharray="1 1.500" />
        <path d="M0 31h62M0 47h62" stroke="#cfccc8" strokeWidth="1.200" />
      </Tile>
    ),
  },
  {
    id: "contacts",
    icon: (
      <div className="flex items-center">
        <Tile bg="bg-[#ae8349]">
          <path d="M0 0h5v62H0z" fill="#8f6a38" />
          <circle cx="33" cy="31" r="18.500" fill="none" stroke="#8a6634" strokeWidth="1.500" />
          <circle cx="33" cy="27" r="6.500" fill="#8f6a38" />
          <path d="M20 44q3-7 13-7t13 7q-6 6-13 5.500Q25 49 20 44" fill="#8f6a38" />
        </Tile>
        <div className="-mr-[3px] flex h-[46px] w-[3px] flex-col overflow-hidden rounded-r-[3px]">
          <div className="flex-1 bg-[#a9a9ae]" /><div className="flex-1 bg-[#52b8ec]" /><div className="flex-1 bg-[#f2912f]" /><div className="flex-1 bg-[#45c75b]" />
        </div>
      </div>
    ),
  },
  {
    id: "settings",
    icon: (
      <Tile bg="bg-[linear-gradient(#cfdde6,#8a8987)]">
        <circle cx="31" cy="31" r="26" fill="#2a2b2c" />
        <circle cx="31" cy="31" r="23.500" fill="none" stroke="#9b9d9f" strokeWidth="2.500" strokeDasharray="1.500 1" />
        <circle cx="31" cy="31" r="19.500" fill="none" stroke="#a2a4a6" strokeWidth="3.500" />
        <circle cx="31" cy="31" r="12" fill="none" stroke="#77797b" strokeWidth="3.500" />
        <path d="M31 31h19M31 31 21.500 14.500M31 31l-9.500 16.500" stroke="#b4b6b8" strokeWidth="3" />
        <circle cx="31" cy="31" r="3" fill="#55585a" />
      </Tile>
    ),
  },
  {
    id: "chrome", open: true,
    icon: (
      <Tile bg="bg-[#f4f4f6]">
        <g transform="translate(4 4) scale(1.125)">
          <path d="M24 12h20.800A24 24 0 0 0 3.200 12l10.400 18A12 12 0 0 1 24 12z" fill="#e2463b" />
          <path d="M13.600 30 3.200 12A24 24 0 0 0 24 48l10.400-18a12 12 0 0 1-20.800 0z" fill="#2f9d4d" />
          <path d="M34.400 30 24 48a24 24 0 0 0 20.800-36H24a12 12 0 0 1 10.400 18z" fill="#fcbf32" />
          <circle cx="24" cy="24" r="11.700" fill="#fff" /><circle cx="24" cy="24" r="9.400" fill="#3f82ee" />
        </g>
      </Tile>
    ),
  },
  {
    id: "opera",
    icon: (
      <Tile bg="bg-white">
        <defs><linearGradient id="op" x1="0" x2="1"><stop stopColor="#fb2334" /><stop offset=".5" stopColor="#d3141f" /><stop offset="1" stopColor="#f9464c" /></linearGradient></defs>
        <path fillRule="evenodd" d="M31 4a27 27 0 1 0 0 54 27 27 0 0 0 0-54m0 4.500c8 0 14 10 14 22.500S39 53.500 31 53.500 17.500 43.500 17.500 31 23 8.500 31 8.500" fill="url(#op)" />
      </Tile>
    ),
  },
  {
    id: "appstore",
    icon: (
      <Tile bg="bg-[linear-gradient(#28b9f4,#1f62dc)]">
        <g stroke="#f1f6fb" strokeWidth="5" strokeLinecap="round"><path d="M12 38.500h20M44 38.500h7M34 15 21 37.500M28 14l19 34M17 45l-1.500 3" /></g>
      </Tile>
    ),
  },
  {
    id: "tv",
    icon: (
      <div className="flex size-[62px] items-center justify-center rounded-[15px] bg-[linear-gradient(#28342f,#0c1013)] pb-[3px] text-[26px] leading-none font-medium text-[#f7f7f7]">
        <FaApple className="h-[24px] w-[19px]" /><span className="mt-[2px]">tv</span>
      </div>
    ),
  },
  {
    id: "podcasts",
    icon: (
      <Tile bg="bg-[linear-gradient(#c667ee,#7a2fb4)]">
        <g fill="none" stroke="#fff" strokeWidth="2.600">
          <path d="M23.500 49.500a21 21 0 1 1 15 0" /><path d="M23.500 40.500a13.500 13.500 0 1 1 15 0" />
        </g>
        <circle cx="31" cy="27.500" r="5" fill="#fff" />
        <path d="M26 38q0-2.500 5-2.500t5 2.500l-1.500 14q-.5 3-3.500 3t-3.500-3z" fill="#fff" />
      </Tile>
    ),
  },
  {
    id: "music",
    icon: (
      <Tile bg="bg-[linear-gradient(#fb5c74,#fa243c)]">
        <path d="m22.500 14 23-4v33a6 5 0 1 1-3-5V20l-17 3.200V47a6 5 0 1 1-3-4.500z" fill="#fff" />
      </Tile>
    ),
  },
  {
    id: "vscode", open: true,
    icon: (
      <Tile bg="bg-white">
        <path d="M41.500 9.500V22L14 43.500 9 40q-.8-1.500.5-2.500z" fill="#0c68ad" />
        <path d="M41.500 54V41.500L14 19.500 9 23q-.8 1.500.5 2.500z" fill="#137fd0" />
        <path d="M41.500 9.500 53 15v33l-11.500 6z" fill="#2a9df0" />
      </Tile>
    ),
  },
];

const pinned: { id: string; icon: ReactNode }[] = [
  { id: "postman", icon: (
    <Tile bg="bg-[#ff6c37]">
      <circle cx="45.500" cy="16.500" r="5" fill="#fff" />
      <path d="m42 20 2 2-13 16-16 12-3-1 2-2 13-15z" fill="#fff" />
      <path d="m24 30 14-10-10 14zM29 37l13-13" stroke="#fff" strokeWidth="3" />
      <path d="m46 12-2 5 3 2M22 33l8 5M39 22 26 34" stroke="#ff6c37" strokeWidth="1.200" fill="none" />
    </Tile>
  ) },
  { id: "terminal", icon: (
    <Tile bg="bg-[linear-gradient(#cfe0e6,#8a8785)]">
      <rect x="2" y="2.500" width="58" height="57" rx="13" fill="#000" />
      <rect x="7" y="7" width="48" height="48" rx="8" fill="#262626" />
      <path d="m11 12 6.500 4-6.500 4M21 23.500h9" stroke="#fff" strokeWidth="2" fill="none" />
    </Tile>
  ) },
  { id: "telegram", icon: (
    <Tile bg="bg-[linear-gradient(#36aeea,#2a8fde)]">
      <path d="M11 30.500 46.500 16.500q2.500-.5 2 2L43 47q-1 2.500-3.500 1L27 39.500 41 23 22 36l-10.500-3q-2-1-.5-2.500" fill="#fff" />
    </Tile>
  ) },
  { id: "cursor", icon: (
    <Tile bg="bg-black">
      <path d="m31 9.500 19 11v21l-19 11-19-11v-21z" fill="#6f6f6f" />
      <path d="m31 9.500 19 11H12z" fill="#5a5a5a" /><path d="m31 9.500 0 11H12z" fill="#8b8b8b" />
      <path d="M12 41.500 12 20.500 31 31z" fill="#434343" />
      <path d="m12 41.500 19-10.500v21.500z" fill="#a9a9a9" />
      <path d="m50 41.500-12-4-7 15z" fill="#d8d8d8" />
      <path d="M31 31 12 20.500h38z" fill="#fff" />
      <path d="m31 31 19-10.500-19 32z" fill="#dcdcdc" />
    </Tile>
  ) },
];

function DockItem({ icon, open }: { icon: ReactNode; open?: boolean }) {
  return (
    <div className="flex w-[82px] shrink-0 flex-col items-center pt-[14px]">
      {icon}
      {open && <div className="mt-[10px] size-2 rounded-full bg-[#a48fc2]" />}
    </div>
  );
}

const DockDivider = () => <div className="mx-[17px] mt-[12px] h-[72px] w-[2px] shrink-0 bg-[#7b5a94]" />;

function Trash() {
  return (
    <div className="flex w-[82px] shrink-0 justify-center pt-[6px]">
      <svg viewBox="0 0 58 76" className="h-[76px] w-[58px]">
        <defs><linearGradient id="bin" x1="0" x2="1"><stop stopColor="#7f8488" /><stop offset=".5" stopColor="#63686b" /><stop offset="1" stopColor="#8f9397" /></linearGradient></defs>
        <path d="M2 12h54l-6 56q-1 7-21 7T9 68z" fill="url(#bin)" />
        <path d="M2 12q5 7 27 7t27-7l-1 6q-6 5-26 5T3 18z" fill="#8e9296" />
        <path d="m4 12 8-5 5-5 6 3 8-1 7-2 6 5 9 4 1 5-10 4-14 1-16-1-9-4z" fill="#e3e4e6" />
        <path d="m10 9 8 8 6-10 8 10 5-9 6 9 8-6" stroke="#777b80" strokeWidth="1.500" fill="none" />
        <path d="m20 11 7-1-3 4z" fill="#25a9d8" /><path d="m36 10 7 5-9 3zM27 14l3 4-4 1z" fill="#a5482c" /><path d="m41 8 4 4-5 1z" fill="#2c4f98" />
        <path d="M12 24q4 25 3 46M46 24q-4 25-4 46" stroke="#aeb2b5" strokeWidth="2" fill="none" opacity=".5" />
      </svg>
    </div>
  );
}

function Dock() {
  return (
    <div className="mx-auto flex h-[100px] w-[2216px] shrink-0 rounded-[36px] border-2 border-white/15 bg-[linear-gradient(90deg,#1f152f,#201438_35%,#251445_58%,#441460_68%,#451463_76%,#321553_87%,#241542_94%,#22153d)] pl-[4px]">
      {apps.map((a) => <DockItem key={a.id} icon={a.icon} open={a.open} />)}
      <DockDivider />
      {pinned.map((a) => <DockItem key={a.id} icon={a.icon} open />)}
      <DockDivider />
      <Trash />
    </div>
  );
}

export default function App() {
  return (
    <div className="flex h-[1596px] w-[2560px] flex-col overflow-hidden bg-[linear-gradient(90deg,#05021a,#0d0430_30%,#110537_64%,#3c0c66_66%,#3a0b63_74%,#16053d_86%,#0b0428)] font-['Inter',sans-serif]">
      <MenuBar />
      <div className="h-[1441px] shrink-0 bg-[linear-gradient(#2c0f6b,#05021a_40px)]">
        <div className="relative flex h-[1441px] flex-col overflow-hidden rounded-[20px] border-t border-b-2 border-black bg-[#8d78a5] pt-[2px]">
          <TabStrip />
          <Toolbar />
          <div className="flex min-h-0 flex-1">
            <div className="flex w-[2530px] flex-col overflow-hidden">
              <SiteHeader />
              <Hero />
            </div>
            <div className="w-[30px] border-l-2 border-[#3a3a3a] bg-[#2b2b2b]">
              <div className="mt-[618px] ml-[6px] h-[124px] w-4 rounded-full bg-[#6b6b6b]" />
            </div>
          </div>
          <div className="pointer-events-none absolute inset-0 rounded-[19px] border border-white/20" />
        </div>
      </div>
      <Dock />
    </div>
  );
}
